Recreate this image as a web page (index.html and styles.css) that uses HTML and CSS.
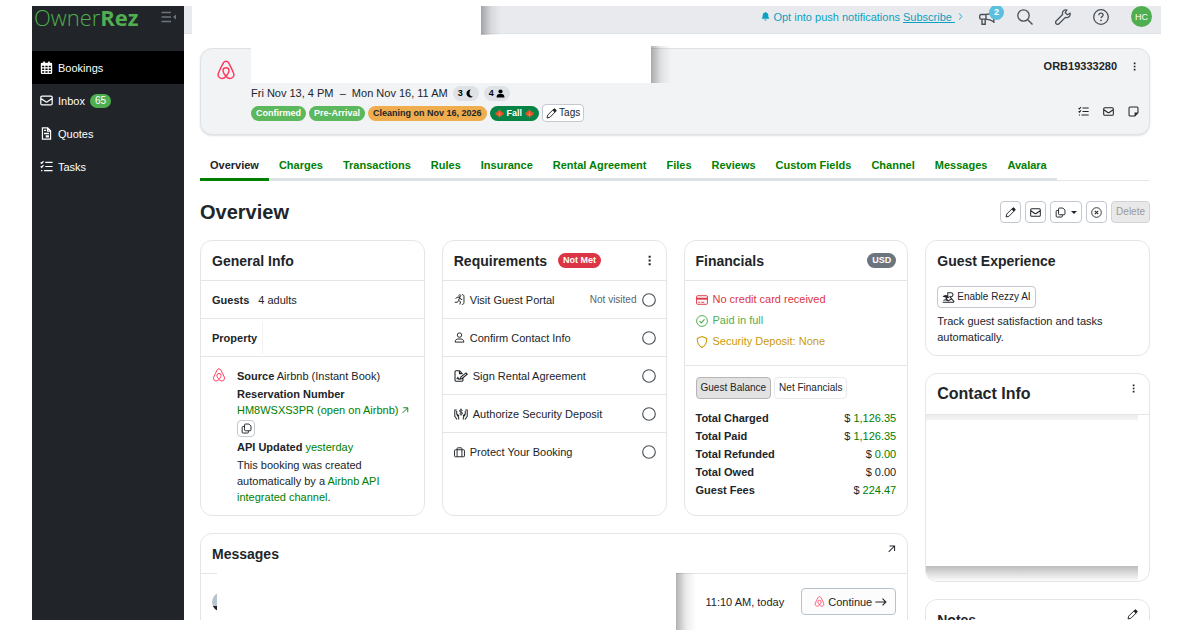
FILE: index.html
```html
<!DOCTYPE html>
<html lang="en">
<head>
<meta charset="UTF-8" />
<meta name="viewport" content="width=device-width, initial-scale=1" />
<title>OwnerRez - Booking Overview</title>
<link rel="stylesheet" href="styles.css">
</head>
<body>
<svg class="sprite" aria-hidden="true">
  <symbol id="airbnb" viewBox="0 0 24 24"><path d="M12 19.5C9.5 16.5 8.4 14.5 8.4 12.9A3.6 3.6 0 0 1 15.6 12.9C15.6 14.5 14.5 16.5 12 19.5C10 22 7.5 22.8 5.3 21.8C2.8 20.7 2 18 3 15.5C4.5 11.8 7 6.8 9 3.2C10.3.8 13.7.8 15 3.2C17 6.8 19.5 11.8 21 15.5C22 18 21.2 20.7 18.7 21.8C16.5 22.8 14 22 12 19.5Z" fill="none" stroke="currentColor" stroke-width="1.7"/></symbol>
  <symbol id="mail" viewBox="0 0 16 16"><path d="M2.5 2.500h11A1.500 1.500 0 0 1 15 4v8a1.500 1.500 0 0 1-1.500 1.500h-11A1.500 1.500 0 0 1 1 12V4A1.500 1.500 0 0 1 2.500 2.500zM1.200 5.500L7 9.500a1.700 1.700 0 0 0 2 0l5.800-4" fill="none" stroke="currentColor" stroke-width="1.5"/></symbol>
  <symbol id="tasks" viewBox="0 0 16 16"><path d="M.8 3l1.300 1.200L4.300 1.500M.8 7.800l1.300 1.200 2.200-2.700M6.500 3h9M6.500 8h9M5 13h10.500M1.300 13h1.600" fill="none" stroke="currentColor" stroke-width="1.500"/></symbol>
  <symbol id="dots" viewBox="0 0 16 16"><path d="M6.700 1h3v3h-3zM6.700 6.500h3v3h-3zM6.700 12h3v3h-3z" fill="currentColor"/></symbol>
  <symbol id="pencil" viewBox="0 0 16 16"><path d="M1.500 14.500l1-4.200L10.800 2a1.700 1.700 0 0 1 2.400 0l.8.8a1.700 1.700 0 0 1 0 2.400L5.700 13.500z" fill="none" stroke="currentColor" stroke-width="1.400"/><path d="M9.500 3.300l1.800-1.800a1.500 1.500 0 0 1 2.200 0l1 1a1.500 1.500 0 0 1 0 2.200l-1.800 1.800z" fill="currentColor"/></symbol>
  <symbol id="copy" viewBox="0 0 16 16"><path d="M6.500 1.500h5l3 3V10A1.300 1.300 0 0 1 13.200 11.300H6.500A1.300 1.300 0 0 1 5.200 10V2.800A1.300 1.300 0 0 1 6.500 1.500zM5 5H3A1.300 1.300 0 0 0 1.700 6.300v7A1.300 1.300 0 0 0 3 14.600h6.500a1.300 1.300 0 0 0 1.300-1.300v-1.500" fill="none" stroke="currentColor" stroke-width="1.400"/></symbol>
  <symbol id="arrow-out" viewBox="0 0 16 16"><path d="M3 14L13 4M4.500 3.500h9V12.500" fill="none" stroke="currentColor" stroke-width="1.800"/></symbol>
  <symbol id="circle" viewBox="0 0 16 16"><circle cx="8" cy="8" r="7.200" fill="none" stroke="currentColor" stroke-width="1.300"/></symbol>
  <symbol id="leaf" viewBox="0 0 16 16"><path d="M8 0l2 3.500 1.800-.8-.3 3.500 4.200-.8-1.200 2.400 1.500 1.400-4.300 2.600.5 1.800-3.500-.5V16H7.300v-2.900l-3.500.5.5-1.800L0 9.200l1.500-1.400L.3 5.400l4.200.8-.3-3.500 1.800.8z" fill="#e0522c"/><path d="M8 5v8M8 11.500l3-3M8 11.500l-3-3" stroke="#f2a134" fill="none"/></symbol>
</svg>

<div class="stage">
<div class="app">
  <aside class="sidebar">
    <div class="brand">
      <a class="logo" href="#">Owner<b>Rez</b></a>
      <button class="collapse" aria-label="Collapse menu">
        <svg class="icon-lg" viewBox="0 0 16 16"><path d="M.5 3.500H10M.5 8H10M.5 12.500H10" fill="none" stroke="currentColor" stroke-width="1.400"/><path d="M15 5.500v5L12 8z" fill="currentColor"/></svg>
      </button>
    </div>
    <nav class="menu">
      <a class="active" href="#">
        <svg class="icon" viewBox="0 0 16 16"><path d="M4 .5h2V2h4V.5h2V2h1.500A1.500 1.500 0 0 1 15 3.500v11a1.500 1.500 0 0 1-1.500 1.500h-11A1.500 1.500 0 0 1 1 14.500v-11A1.500 1.500 0 0 1 2.500 2H4zM2.600 5.800v2h2.600v-2zm4 0v2h2.800v-2zm4.200 0v2h2.600v-2zM2.600 9.200v2h2.600v-2zm4 0v2h2.800v-2zm4.200 0v2h2.600v-2zM2.600 12.600v2h2.600v-2zm4 0v2h2.800v-2zm4.200 0v2h2.600v-2z" fill="currentColor" fill-rule="evenodd"/></svg>
        Bookings
      </a>
      <a href="#"><svg class="icon"><use href="#mail"/></svg>Inbox <span class="count">65</span></a>
      <a href="#">
        <svg class="icon" viewBox="0 0 16 16"><path d="M3 1.200h6.500L13 4.700v10.100H3zM9.300 1.500V5H13" fill="none" stroke="currentColor" stroke-width="1.500"/><path d="M5 7h6v2H5zM7 10h4v3H7zM5 3.500h2.500V5H5z" fill="currentColor"/></svg>
        Quotes
      </a>
      <a href="#"><svg class="icon"><use href="#tasks"/></svg>Tasks</a>
    </nav>
  </aside>

  <div class="content">
    <header class="topbar">
      <div class="mask mask-search"></div>
      <p class="push">
        <svg class="icon-xs" viewBox="0 0 16 16"><path d="M8 0a1 1 0 0 1 1 1c3 .6 4 2.500 4 5 0 3.500 1 4.500 2 6H1c1-1.500 2-2.500 2-6 0-2.500 1-4.400 4-5a1 1 0 0 1 1-1zM6 13.500h4a2 2 0 0 1-4 0z" fill="currentColor"/></svg>
        Opt into push notifications <a href="#">Subscribe </a><svg class="chev" viewBox="0 0 8 16"><path d="M2 3l4 5-4 5" fill="none" stroke="currentColor" stroke-width="1.400"/></svg>
      </p>
      <button class="tool" aria-label="Announcements">
        <svg class="icon-lg" viewBox="0 0 16 16"><path d="M14.800 2v12M14.800 3C12 5 9 5.500 6.500 5.500H2A1.300 1.300 0 0 0 .7 6.800v2A1.300 1.300 0 0 0 2 10.100h4.500c2.500 0 5.500.7 8.300 2.700M7 5.500v4.600M3 10.100v5.200h3.200v-5.200" fill="none" stroke="currentColor" stroke-width="1.400"/></svg>
        <span class="dot">2</span>
      </button>
      <button class="tool" aria-label="Search">
        <svg class="icon-lg" viewBox="0 0 16 16"><circle cx="6.500" cy="6.500" r="5.700" fill="none" stroke="currentColor" stroke-width="1.300"/><path d="M10.700 10.700l4.800 4.800" stroke="currentColor" stroke-width="1.400"/></svg>
      </button>
      <button class="tool" aria-label="Settings">
        <svg class="icon-lg" viewBox="0 0 16 16"><path d="M15 4.200l-2.600 1.600-2.200-2.200L11.800 1C9.500.2 6.800 2 7.600 5.500L1.200 12a1.900 1.900 0 0 0 2.800 2.800l6.400-6.400C13.800 9.200 15.800 6.500 15 4.200z" fill="none" stroke="currentColor" stroke-width="1.300"/></svg>
      </button>
      <button class="tool" aria-label="Help">
        <svg class="icon-lg" viewBox="0 0 16 16"><circle cx="8" cy="8" r="7.300" fill="none" stroke="currentColor" stroke-width="1.300"/><path d="M5.900 6.200c0-1.300.9-2 2.100-2s2.100.8 2.100 1.900c0 1.500-2.100 1.500-2.100 3" fill="none" stroke="currentColor" stroke-width="1.300"/><circle cx="8" cy="11.300" r=".9" fill="currentColor"/></svg>
      </button>
      <button class="avatar">HC</button>
    </header>

    <main>
      <section class="booking">
        <svg class="icon-xl brand-airbnb"><use href="#airbnb"/></svg>
        <div class="booking-info">
          <div class="dates">
            <span>Fri Nov 13, 4 PM &nbsp;–&nbsp; Mon Nov 16, 11 AM</span>
            <span class="pill">3 <svg class="icon-xs" viewBox="0 0 16 16"><path d="M10 1a7 7 0 1 0 4 12.500C8 13.500 6 7 10 1z" fill="currentColor"/></svg></span>
            <span class="pill">4 <svg class="icon-xs" viewBox="0 0 16 16"><circle cx="8" cy="4.500" r="3.700" fill="currentColor"/><path d="M1 15c0-4 2-6 4.500-6h5C13 9 15 11 15 15z" fill="currentColor"/></svg></span>
          </div>
          <div class="tags">
            <span class="badge green">Confirmed</span>
            <span class="badge green">Pre-Arrival</span>
            <span class="badge orange">Cleaning on Nov 16, 2026</span>
            <span class="badge fall"><svg class="icon-xs"><use href="#leaf"/></svg>Fall<svg class="icon-xs"><use href="#leaf"/></svg></span>
            <button class="btn tag-btn"><svg class="icon-sm"><use href="#pencil"/></svg>Tags</button>
          </div>
        </div>
        <div class="booking-side">
          <div class="booking-id">ORB19333280 <button class="plain" aria-label="More"><svg class="icon-xs"><use href="#dots"/></svg></button></div>
          <div class="booking-actions">
            <button class="plain" aria-label="Tasks"><svg class="icon-sm"><use href="#tasks"/></svg></button>
            <button class="plain" aria-label="Email"><svg class="icon-sm"><use href="#mail"/></svg></button>
            <button class="plain" aria-label="Note"><svg class="icon-sm" viewBox="0 0 16 16"><path d="M3 1.500h10A1.500 1.500 0 0 1 14.500 3v7l-4.500 4.500H3A1.500 1.500 0 0 1 1.500 13V3A1.500 1.500 0 0 1 3 1.500z" fill="none" stroke="currentColor" stroke-width="1.500"/><path d="M9.500 14.500v-5h5z" fill="currentColor"/></svg></button>
          </div>
        </div>
        <div class="mask mask-title"></div>
      </section>

      <nav class="tabs">
        <a class="current" href="#">Overview</a>
        <a href="#">Charges</a>
        <a href="#">Transactions</a>
        <a href="#">Rules</a>
        <a href="#">Insurance</a>
        <a href="#">Rental Agreement</a>
        <a href="#">Files</a>
        <a href="#">Reviews</a>
        <a href="#">Custom Fields</a>
        <a href="#">Channel</a>
        <a href="#">Messages</a>
        <a href="#">Avalara</a>
      </nav>

      <div class="page-head">
        <h1>Overview</h1>
        <div class="toolbar">
          <button class="btn" aria-label="Edit"><svg class="icon-sm"><use href="#pencil"/></svg></button>
          <button class="btn" aria-label="Email"><svg class="icon-sm"><use href="#mail"/></svg></button>
          <button class="btn" aria-label="Copy"><svg class="icon-sm"><use href="#copy"/></svg><span class="caret"></span></button>
          <button class="btn" aria-label="Cancel"><svg class="icon-sm" viewBox="0 0 16 16"><circle cx="8" cy="8" r="7" fill="none" stroke="currentColor" stroke-width="1.300"/><path d="M5.500 5.500l5 5M10.500 5.500l-5 5" stroke="currentColor" stroke-width="1.500"/></svg></button>
          <button class="btn" disabled>Delete</button>
        </div>
      </div>

      <div class="cards">
        <section class="card">
          <div class="card-head"><h2>General Info</h2></div>
          <div class="row guests"><b>Guests</b> <span>4 adults</span></div>
          <div class="row property"><b>Property</b></div>
          <div class="source">
            <svg class="icon-md brand-airbnb"><use href="#airbnb"/></svg>
            <div class="source-text">
              <p><b>Source</b> Airbnb (Instant Book)</p>
              <p><b>Reservation Number</b><br><a href="#">HM8WSXS3PR (open on Airbnb) <svg class="icon-xxs"><use href="#arrow-out"/></svg></a></p>
              <button class="btn copy-btn" aria-label="Copy reservation number"><svg class="icon-sm"><use href="#copy"/></svg></button>
              <p><b>API Updated</b> <a href="#">yesterday</a></p>
              <p>This booking was created automatically by a <a href="#">Airbnb API integrated channel</a>.</p>
            </div>
          </div>
        </section>

        <section class="card">
          <div class="card-head">
            <h2>Requirements</h2><span class="badge red">Not Met</span>
            <button class="plain push-right" aria-label="More"><svg class="icon-sm"><use href="#dots"/></svg></button>
          </div>
          <div class="row req">
            <svg class="icon-sm" viewBox="0 0 16 16"><circle cx="8.500" cy="2.500" r="1.500" fill="none" stroke="currentColor" stroke-width="1.200"/><path d="M2.500 7l2-2.500 4 .7-2 4 3 2-1 4M6.500 9.500L5 12H1M8.500 5.500l1.500 2.300h2M11.500.8c2 0 3 1 3 3v8.400c0 2-1 3-3 3" fill="none" stroke="currentColor" stroke-width="1.400"/></svg>
            Visit Guest Portal <small>Not visited</small><svg class="icon-ring"><use href="#circle"/></svg>
          </div>
          <div class="row req">
            <svg class="icon-sm" viewBox="0 0 16 16"><circle cx="8" cy="4.500" r="3.200" fill="none" stroke="currentColor" stroke-width="1.400"/><path d="M1.700 14.700c0-3 1.800-4.500 4-4.500h4.600c2.200 0 4 1.500 4 4.500z" fill="none" stroke="currentColor" stroke-width="1.400"/></svg>
            Confirm Contact Info<svg class="icon-ring"><use href="#circle"/></svg>
          </div>
          <div class="row req">
            <svg class="icon-md" viewBox="0 0 18 16"><path d="M11.500 11v2.500a1.200 1.200 0 0 1-1.200 1.200H2.500a1.200 1.200 0 0 1-1.200-1.200v-11a1.200 1.200 0 0 1 1.200-1.200H7l4 4M7 1.500V5h4M3.500 12l1.500-2 1 2h2l1-3 6.500-5 1.500 1.800-6.500 5.400-3 1" fill="none" stroke="currentColor" stroke-width="1.400"/></svg>
            Sign Rental Agreement<svg class="icon-ring"><use href="#circle"/></svg>
          </div>
          <div class="row req">
            <svg class="icon-md" viewBox="0 0 18 16"><path d="M6 15v-3L3.500 8.500M3.500 3H1v8l3 4M12 15v-3l2.500-3.500M14.500 3H17v8l-3 4M3.500 4v4l3 2.500M14.500 4v4l-3 2.500" fill="none" stroke="currentColor" stroke-width="1.300"/><path d="M11 3.500c-2-1.500-4-.8-4 .5 0 2 4 1 4 3 0 1.600-2.500 1.800-4 .6M9 1v9" fill="none" stroke="currentColor" stroke-width="1.200"/></svg>
            Authorize Security Deposit<svg class="icon-ring"><use href="#circle"/></svg>
          </div>
          <div class="row req">
            <svg class="icon-sm" viewBox="0 0 16 16"><path d="M2 4h12A1.200 1.200 0 0 1 15.200 5.200v7.800a1.200 1.200 0 0 1-1.200 1.200H2A1.200 1.200 0 0 1 .8 13V5.200A1.200 1.200 0 0 1 2 4zM4.500 14V2.200A1 1 0 0 1 5.500 1.200h5a1 1 0 0 1 1 1V14" fill="none" stroke="currentColor" stroke-width="1.400"/></svg>
            Protect Your Booking<svg class="icon-ring"><use href="#circle"/></svg>
          </div>
        </section>

        <section class="card">
          <div class="card-head"><h2>Financials</h2><span class="badge gray push-right">USD</span></div>
          <ul class="status">
            <li class="bad"><svg class="icon-st" viewBox="0 0 16 16"><path d="M2 2.300h12a1.200 1.200 0 0 1 1.200 1.200v9a1.200 1.200 0 0 1-1.200 1.200H2A1.200 1.200 0 0 1 .8 12.500v-9A1.200 1.200 0 0 1 2 2.300zM3 11h2.500M7 11h4" fill="none" stroke="currentColor" stroke-width="1.300"/><path d="M1 5h14v2.500H1z" fill="currentColor"/></svg>No credit card received</li>
            <li class="good"><svg class="icon-st" viewBox="0 0 16 16"><circle cx="8" cy="8" r="7.200" fill="none" stroke="currentColor" stroke-width="1.300"/><path d="M4.800 8.300L7 10.500l4.300-4.700" fill="none" stroke="currentColor" stroke-width="1.500"/></svg>Paid in full</li>
            <li class="warn"><svg class="icon-st" viewBox="0 0 16 16"><path d="M8 .8l6.300 2.500c.3 5.500-2 9.700-6.300 12C3.700 13 1.400 8.800 1.700 3.300z" fill="none" stroke="currentColor" stroke-width="1.400"/></svg>Security Deposit: None</li>
          </ul>
          <div class="balance">
            <div class="switch">
              <button class="btn on">Guest Balance</button>
              <button class="btn off">Net Financials</button>
            </div>
            <table>
              <tr><th>Total Charged</th><td>$ <span>1,126.35</span></td></tr>
              <tr><th>Total Paid</th><td>$ <span>1,126.35</span></td></tr>
              <tr><th>Total Refunded</th><td>$ <span>0.00</span></td></tr>
              <tr><th>Total Owed</th><td>$ 0.00</td></tr>
              <tr><th>Guest Fees</th><td>$ <span>224.47</span></td></tr>
            </table>
          </div>
        </section>

        <div class="side">
          <section class="card">
            <div class="card-head bare"><h2>Guest Experience</h2></div>
            <div class="experience">
              <button class="btn"><svg class="icon" viewBox="0 0 18 16"><path d="M8 7V1.500h4.500a2.500 2.500 0 0 1 0 5.500H11l6 7M1 14.500h15.500M8 13l5-3M2 12c2-1 5-1 7 1" fill="none" stroke="currentColor" stroke-width="1.400"/><path d="M1 7c1-2.500 5-3.500 7-1.500L10.500 9 7 8.500 8 12H5.500L5 8z" fill="currentColor"/></svg>Enable Rezzy AI</button>
              <p>Track guest satisfaction and tasks automatically.</p>
            </div>
          </section>
          <section class="card contact">
            <div class="card-head"><h2 class="big">Contact Info</h2>
              <button class="plain push-right raised" aria-label="More"><svg class="icon-xs"><use href="#dots"/></svg></button>
            </div>
            <div class="contact-body"></div>
          </section>
          <section class="card">
            <div class="card-head bare"><h2>Notes</h2>
              <button class="plain push-right raised" aria-label="Edit notes"><svg class="icon-sm"><use href="#pencil"/></svg></button>
            </div>
          </section>
        </div>

        <section class="card messages">
          <div class="card-head"><h2>Messages</h2>
            <button class="plain push-right raised" aria-label="Open messages"><svg class="icon-xs"><use href="#arrow-out"/></svg></button>
          </div>
          <div class="message">
            <span class="photo"></span>
            <time>11:10 AM, today</time>
            <button class="btn continue"><svg class="icon-sm brand-airbnb"><use href="#airbnb"/></svg>Continue<svg class="icon-st" viewBox="0 0 16 16"><path d="M.5 8h14M10 3.500L14.500 8 10 12.500" fill="none" stroke="currentColor" stroke-width="1.500"/></svg></button>
          </div>
        </section>
      </div>
    </main>
  </div>
</div>
<div class="mask mask-message"></div>
</div>
</body>
</html>
```

FILE: styles.css
```css
* { box-sizing: border-box; }
body { margin: 0; font-family: "Liberation Sans", Arial, sans-serif; font-size: 11px; line-height: 16px; color: #212529; background: #fff; }
p, h1, h2, ul { margin: 0; padding: 0; }
a { color: #008000; text-decoration: none; }
button { font: inherit; color: inherit; cursor: pointer; }
svg { flex: none; }
.sprite { position: absolute; width: 0; height: 0; }
.icon { width: 13px; height: 13px; }
.icon-xxs { width: 8px; height: 8px; }
.icon-xs { width: 9px; height: 9px; }
.icon-sm { width: 11px; height: 11px; }
.icon-st { width: 12px; height: 12px; }
.icon-md { width: 14px; height: 14px; }
.icon-lg { width: 16px; height: 16px; }
.icon-xl { width: 20px; height: 20px; }
.icon-ring { width: 14px; height: 14px; color: #495057; }
.brand-airbnb { color: #ff385c; }

.stage { position: relative; height: 100vh; padding: 6px 39px 10px 32px; overflow: hidden; }
.app { display: grid; grid-template-columns: 152px 1fr; height: 100%; overflow: hidden; }
.content { min-width: 0; }

/* sidebar */
.sidebar { background: #212529; color: #fff; }
.brand { display: flex; align-items: center; justify-content: space-between; height: 22px; padding: 0 7px 0 2px; margin-bottom: 23px; }
.logo { font-family: "Open Sans", sans-serif; font-size: 22px; font-weight: 300; color: #4fae50; }
.logo b { font-weight: 700; }
.collapse { display: flex; padding: 0; border: 0; background: none; color: #6c757d; }
.menu a { display: flex; align-items: center; gap: 5px; height: 33px; padding: 0 8px; color: #fff; }
.menu .active { background: #000; }
.count { padding: 0 5px; border-radius: 8px; background: #4fae50; font-size: 10px; line-height: 14px; }

/* top bar */
.topbar { position: relative; display: flex; align-items: center; justify-content: flex-end; gap: 22px; height: 28px; padding: 0 9px 6px 0; background: #e9eaee; border-bottom: 1px solid #dde2e6; }
.push { display: flex; align-items: center; gap: 3px; margin-right: -6px; color: #0aa2c0; }
.push a { color: #0aa2c0; text-decoration: underline; white-space: pre; }
.chev { width: 5px; height: 11px; }
.tool { position: relative; display: flex; padding: 0; border: 0; background: none; color: #495057; }
.dot { position: absolute; top: -4px; left: 10px; width: 15px; height: 15px; border-radius: 8px; background: #5bc0de; color: #fff; font-size: 9px; font-weight: 700; line-height: 14px; }
.avatar { width: 21px; height: 21px; padding: 0; border: 0; border-radius: 50%; background: #4fae50; color: #fff; font-size: 9px; }

main { padding: 14px 11px 0 16px; }
.btn { display: inline-flex; align-items: center; justify-content: center; gap: 2px; height: 22px; padding: 0 4px; border: 1px solid #c3c9cf; border-radius: 4px; background: #fff; font-size: 10px; line-height: 14px; }
.btn:disabled { background: #e9e9ea; color: #999; border-color: #cfd3d6; }
.plain { display: inline-flex; padding: 0; border: 0; background: none; }
.push-right { margin-left: auto; }

/* booking header */
.booking { position: relative; display: flex; height: 87px; padding: 11px 10px 11px 15px; border: 1px solid #dee2e6; border-radius: 12px; background: #f2f3f5; box-shadow: 0 1px 2px #dee2e6; }
.booking-info { flex: 1; display: flex; flex-direction: column; gap: 3px; padding: 25px 0 0 15px; }
.dates, .tags { display: flex; align-items: center; gap: 3px; }
.pill { display: flex; align-items: center; gap: 2px; margin-left: 2px; padding: 0 5px; border-radius: 8px; background: #dee2e6; color: #000; font-size: 9px; font-weight: 700; line-height: 15px; }
.badge { display: inline-flex; align-items: center; gap: 3px; padding: 0 5px; border-radius: 8px; color: #fff; font-size: 9px; font-weight: 700; line-height: 15px; }
.green { background: #5cb85c; }
.orange { background: #f0ad4e; color: #212529; }
.fall { background: #078345; }
.red { background: #dc3545; margin-left: 11px; }
.gray { background: #6c757d; }
.tag-btn { height: 18px; padding: 0 3px; }
.booking-side { display: flex; flex-direction: column; justify-content: space-between; align-items: flex-end; padding-bottom: 6px; }
.booking-id { display: flex; align-items: center; gap: 13px; font-weight: 700; line-height: 12px; }
.booking-actions { display: flex; gap: 14px; }

/* tabs */
.tabs { display: flex; margin-top: 22px; border-bottom: 1px solid #e4e6e9; }
.tabs a { padding: 0 10px 5px; margin-bottom: -1px; border-bottom: 3px solid #dee2e6; font-weight: 700; white-space: nowrap; }
.tabs .current { color: #212529; border-color: #008000; }

.page-head { display: flex; align-items: center; justify-content: space-between; margin: 20px 0 17px; }
h1 { font-size: 20px; line-height: 22px; }
.toolbar { display: flex; gap: 4px; }
.caret { margin-left: 3px; border: 3px solid transparent; border-top-color: #212529; border-bottom: 0; }

/* cards */
.cards { display: grid; grid-template-columns: repeat(4, 1fr); grid-template-rows: auto 1fr; gap: 17px; }
.card { min-width: 0; border: 1px solid #e3e6e9; border-radius: 12px; background: #fff; }
.card-head { display: flex; align-items: center; height: 40px; padding: 0 11px; border-bottom: 1px solid #e3e6e9; }
.bare { height: 39px; border-bottom: 0; }
.raised { margin-bottom: 11px; }
h2 { font-size: 14px; line-height: 18px; }
.big { font-size: 16px; }
.row { display: flex; align-items: center; height: 38px; padding: 0 11px; border-bottom: 1px solid #e3e6e9; white-space: nowrap; }
.guests { gap: 9px; }
.property b { padding-right: 5px; border-right: 1px solid #f3f3f3; line-height: 32px; }
.source { display: flex; gap: 11px; padding: 11px 11px 10px; }
.source-text { display: flex; flex-direction: column; align-items: flex-start; gap: 2px; }
.copy-btn { width: 18px; height: 17px; padding: 0; }
.req { gap: 5px; padding-right: 10px; }
.req:last-child { border-bottom: 0; }
.req small { margin-left: auto; font-size: 10px; color: #5c636a; }
.req .icon-ring { margin-left: auto; }
.req small + .icon-ring { margin-left: 0; }

.status { padding: 8px 11px 13px; border-bottom: 1px solid #e3e6e9; list-style: none; }
.status li { display: flex; align-items: center; gap: 5px; line-height: 21px; }
.bad { color: #dc3545; }
.good { color: #4fae50; }
.warn { color: #cc9a06; }
.balance { padding: 11px; }
.switch { display: flex; gap: 3px; margin-bottom: 10px; white-space: nowrap; }
.on { background: #e2e2e3; border-color: #b5b5b6; }
.off { border-color: #e9eaec; }
table { width: 100%; border-collapse: collapse; line-height: 18px; }
th, td { padding: 0; text-align: left; }
td { text-align: right; }
td span { color: #008000; }

.side { grid-column: 4; grid-row: 1 / 3; display: flex; flex-direction: column; gap: 17px; }
.experience { padding: 6px 11px 10px; }
.experience .btn { margin-bottom: 5px; }
.contact .card-head { height: 41px; }
.contact-body { height: 166px; margin-right: 11px; border-radius: 0 0 0 11px; background: linear-gradient(#ececec, #f5f5f5 5px, #fff 5px, #fff 151px, #bdbdbd 151px, #fcfcfc); }
.messages { grid-column: 1 / 4; }
.message { display: flex; align-items: center; gap: 17px; padding: 14px 11px; }
.photo { width: 20px; height: 20px; margin-right: auto; border-radius: 50%; background: linear-gradient(#b5c4cf 70%, #212529 70%); }
.continue { gap: 3px; height: 27px; padding: 0 8px 0 12px; font-size: 11px; background: #fcfcfc; border-color: #b9c2c9; }

/* white covers with a soft shadow on the right */
.mask { position: absolute; background: #fff; }
.mask::after { content: ""; position: absolute; top: 0; bottom: 0; left: 100%; width: 20px; background: linear-gradient(90deg, #0000004d, #00000014 50%, transparent); }
.mask-search { top: 0; left: 8px; width: 289px; height: 29px; }
.mask-title { top: -3px; left: 50px; width: 400px; height: 37px; }
.mask-message { bottom: 0; left: 217px; width: 459px; height: 57px; }
```
